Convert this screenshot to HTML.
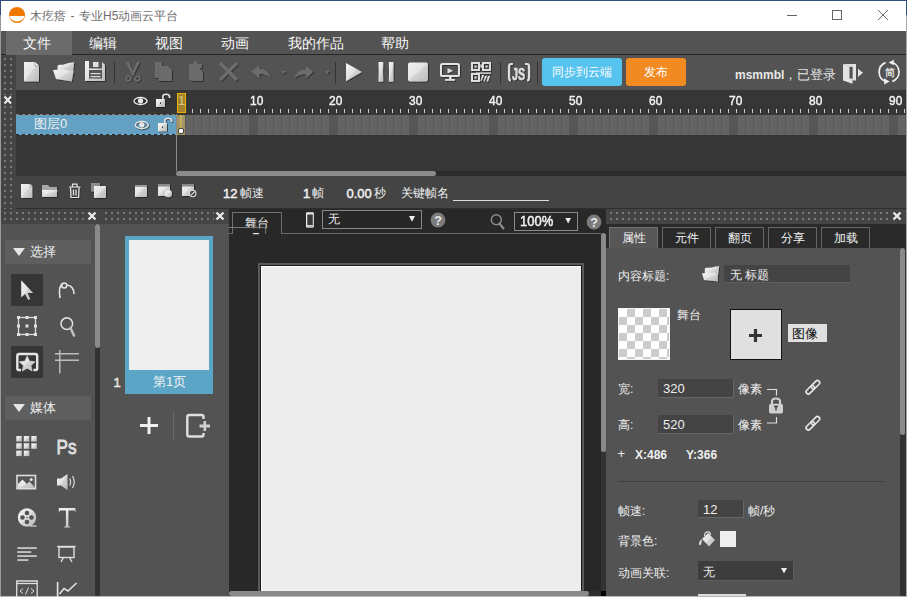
<!DOCTYPE html>
<html><head><meta charset="utf-8">
<style>
*{box-sizing:border-box}
html,body{margin:0;padding:0}
body{width:907px;height:597px;position:relative;overflow:hidden;background:#535353;font-family:"Liberation Sans",sans-serif;color:#e8e8e8}
.a{position:absolute}
.grip{background-image:linear-gradient(90deg,transparent 2px,#444 2px),linear-gradient(#7a7a7a 2px,#444 2px);background-size:6px 6px}
.t{position:absolute;white-space:nowrap;line-height:1}
svg{position:absolute;overflow:visible}
.m{font-size:14px;color:#f8f8f8;top:36px}
.s12{font-size:12px}
.s13{font-size:13px}
.num{color:#f2f2f2;-webkit-text-stroke:0.45px #f2f2f2}
</style></head><body>
<!-- ===== window frame / title ===== -->
<div class="a" style="left:0;top:0;width:907px;height:1px;background:#2f4f7f"></div>
<div class="a" style="left:1px;top:1px;width:905px;height:30px;background:#fff"></div>
<div class="t" style="left:30px;top:10px;font-size:12px;color:#6e6e6e;word-spacing:1.2px">木疙瘩 - 专业H5动画云平台</div>

<!-- ===== menu bar ===== -->
<div class="a" style="left:1px;top:31px;width:905px;height:23px;background:#535353"></div>
<div class="a" style="left:1px;top:54px;width:905px;height:1px;background:#262626"></div>
<div class="a" style="left:6px;top:31px;width:66px;height:24px;background:#6b6b6b"></div>
<div class="t m" style="left:23px">文件</div>
<div class="t m" style="left:89px">编辑</div>
<div class="t m" style="left:155px">视图</div>
<div class="t m" style="left:221px">动画</div>
<div class="t m" style="left:288px">我的作品</div>
<div class="t m" style="left:381px">帮助</div>

<!-- ===== toolbar ===== -->
<div class="a grip" style="left:1px;top:55px;width:15px;height:153px;background-position:3px 3px"></div>
<div class="a" style="left:16px;top:55px;width:890px;height:35px;background:#535353"></div>
<div class="a" style="left:542px;top:58px;width:80px;height:28px;background:#56c2ee;border-radius:3px"></div>
<div class="a" style="left:626px;top:58px;width:60px;height:28px;background:#f28a22;border-radius:3px"></div>
<div class="t s12" style="left:552px;top:66px;color:#fff">同步到云端</div>
<div class="t s12" style="left:644px;top:66px;color:#fff">发布</div>
<div class="t" style="left:735px;top:68.5px;font-size:12px;font-weight:bold;color:#e6e6e6">msmmbl<span style="font-weight:normal;font-size:12.5px">，已登录</span></div>

<!-- ===== timeline ===== -->
<div class="a" style="left:16px;top:90px;width:890px;height:86px;background:#363636"></div>
<!-- layer row -->
<div class="a" style="left:16px;top:114px;width:160px;height:21px;background:#63a0c1"></div><div class="a" style="left:16px;top:114px;width:160px;height:1px;background:repeating-linear-gradient(90deg,#8b7d72 0 3px,#3a3030 3px 6px)"></div><div class="a" style="left:16px;top:134px;width:160px;height:1px;background:repeating-linear-gradient(90deg,#2e2e2e 0 3px,#72b2d6 3px 6px)"></div>
<div class="t s13" style="left:34px;top:117px;color:#f0f0f0">图层0</div>
<!-- frames -->
<div class="a" style="left:177px;top:115px;width:729px;height:20px;background:repeating-linear-gradient(90deg,#585858 0 1px,#646464 1px 8px)"></div>
<div class="a" style="left:249px;top:115px;width:657px;height:20px;background:repeating-linear-gradient(90deg,#565656 0 8px,transparent 8px 80px)"></div>
<div class="a" style="left:177px;top:115px;width:8px;height:20px;background:#a39565"></div>
<div class="a" style="left:176px;top:114px;width:1px;height:57px;background:#8a8a8a"></div>
<!-- ruler ticks -->
<div class="a" style="left:185px;top:109px;width:721px;height:4px;background:repeating-linear-gradient(90deg,transparent 0 7px,#cfcfcf 7px 8px)"></div>
<div class="a" style="left:177px;top:93px;width:9px;height:20px;background:#a2832a;border:1px solid #f0b000"></div>
<div class="t s13 num" style="left:250px;top:93.5px;transform:scaleX(0.92);transform-origin:0 0">10</div>
<div class="t s13 num" style="left:329.3px;top:93.5px;transform:scaleX(0.92);transform-origin:0 0">20</div>
<div class="t s13 num" style="left:409.2px;top:93.5px;transform:scaleX(0.92);transform-origin:0 0">30</div>
<div class="t s13 num" style="left:489.1px;top:93.5px;transform:scaleX(0.92);transform-origin:0 0">40</div>
<div class="t s13 num" style="left:569.0px;top:93.5px;transform:scaleX(0.92);transform-origin:0 0">50</div>
<div class="t s13 num" style="left:648.9px;top:93.5px;transform:scaleX(0.92);transform-origin:0 0">60</div>
<div class="t s13 num" style="left:728.8px;top:93.5px;transform:scaleX(0.92);transform-origin:0 0">70</div>
<div class="t s13 num" style="left:808.7px;top:93.5px;transform:scaleX(0.92);transform-origin:0 0">80</div>
<div class="t s13 num" style="left:888.6px;top:93.5px;transform:scaleX(0.92);transform-origin:0 0">90</div>
<div class="t s13" style="left:178px;top:94px;color:#d8c890">1</div>
<!-- scrollbar -->
<div class="a" style="left:176px;top:171px;width:730px;height:5px;background:#2b2b2b"></div>
<div class="a" style="left:176px;top:171px;width:260px;height:5px;background:#8a8a8a;border-radius:2.5px"></div>
<!-- bottom toolbar -->
<div class="a" style="left:16px;top:176px;width:890px;height:32px;background:#444"></div>
<div class="t s13 num" style="left:223px;top:187px">12</div><div class="t s12" style="left:239.5px;top:187px;color:#eee">帧速</div>
<div class="t s13 num" style="left:303px;top:187px">1</div><div class="t s12" style="left:312px;top:187px;color:#eee">帧</div>
<div class="t s13 num" style="left:346.5px;top:187px">0.00</div><div class="t s12" style="left:374px;top:187px;color:#eee">秒</div>
<div class="t s12" style="left:401px;top:187px;color:#eee">关键帧名</div>
<div class="a" style="left:453px;top:200px;width:96px;height:1px;background:#ddd"></div>

<div class="a" style="left:16px;top:208px;width:890px;height:1px;background:#2e2e2e"></div><div class="a" style="left:1px;top:208px;width:15px;height:1px;background:#444"></div><div class="a" style="left:4px;top:208px;width:2px;height:1px;background:#7a7a7a"></div><div class="a" style="left:10px;top:208px;width:2px;height:1px;background:#7a7a7a"></div>

<!-- ===== left tools panel ===== -->
<div class="a grip" style="left:1px;top:209px;width:99px;height:15px;background-position:3px 3px"></div>
<div class="a" style="left:1px;top:224px;width:94px;height:373px;background:#535353"></div>
<div class="a" style="left:95px;top:224px;width:5px;height:373px;background:#333"></div>
<div class="a" style="left:95px;top:224px;width:5px;height:124px;background:#8a8a8a;border-radius:2.5px"></div>
<div class="a" style="left:5px;top:240px;width:86px;height:24px;background:#5f5f5f"></div>
<div class="t s13" style="left:30px;top:245px;color:#eee">选择</div>
<div class="a" style="left:11px;top:274px;width:32px;height:32px;background:#363636"></div>
<div class="a" style="left:11px;top:346px;width:32px;height:32px;background:#363636"></div>
<div class="a" style="left:5px;top:396px;width:86px;height:24px;background:#5f5f5f"></div>
<div class="t s13" style="left:30px;top:401px;color:#eee">媒体</div>

<!-- ===== pages panel ===== -->
<div class="a" style="left:100px;top:209px;width:3px;height:15px;background:#444"></div>
<div class="a grip" style="left:103px;top:209px;width:126px;height:15px;background-position:2px 3px"></div>
<div class="a" style="left:100px;top:224px;width:129px;height:373px;background:#535353"></div>
<div class="a" style="left:125px;top:236px;width:88px;height:158px;background:#5ba5c6"></div>
<div class="a" style="left:129px;top:240px;width:80px;height:130px;background:#eeeeee"></div>
<div class="t s13" style="left:153px;top:375px;color:#f4f4f4">第1页</div>
<div class="t s13 num" style="left:113.5px;top:376px;color:#e8e0c8">1</div>

<!-- ===== stage ===== -->
<div class="a" style="left:229px;top:209px;width:377px;height:388px;background:#282828"></div>
<div class="a" style="left:281px;top:233px;width:321px;height:1px;background:#6a6a6a"></div><div class="a" style="left:229px;top:233px;width:3px;height:1px;background:#6a6a6a"></div>
<div class="a" style="left:232px;top:212px;width:50px;height:22px;border:1px solid #707070;border-bottom:none;background:#282828"></div>
<div class="t s12" style="left:245px;top:217px;color:#eee">舞台</div>
<div class="a" style="left:322px;top:210px;width:100px;height:19px;border:1px solid #8a8a8a;background:#262626"></div>
<div class="t s12" style="left:328px;top:213px;color:#eee">无</div>
<div class="a" style="left:514px;top:212px;width:64px;height:19px;border:1px solid #8a8a8a;background:#262626"></div>
<div class="t s13 num" style="left:520px;top:215px;transform:scaleY(1.1);transform-origin:0 100%">100%</div>
<div class="a" style="left:258px;top:263px;width:326px;height:340px;background:#5a5a5a"></div>
<div class="a" style="left:260px;top:265px;width:322px;height:340px;background:#1a1a1a"></div>
<div class="a" style="left:261px;top:266px;width:320px;height:340px;background:#ededed;border-top:1px solid #fff;border-left:1px solid #fff"></div>
<div class="a" style="left:601px;top:233px;width:5px;height:358px;background:#333"></div>
<div class="a" style="left:601px;top:233px;width:5px;height:219px;background:#8a8a8a;border-radius:2.5px"></div>
<div class="a" style="left:229px;top:591px;width:372px;height:5px;background:#2d2d2d"></div>
<div class="a" style="left:229px;top:591px;width:360px;height:5px;background:#8a8a8a;border-radius:2.5px"></div>
<div class="a" style="left:601px;top:591px;width:5px;height:5px;background:#000"></div>

<!-- ===== right properties panel ===== -->
<div class="a grip" style="left:606px;top:209px;width:300px;height:15px;background-position:4px 3px"></div>
<div class="a" style="left:606px;top:224px;width:300px;height:24px;background:#2a2a2a"></div>
<div class="a" style="left:609px;top:227px;width:49px;height:21px;background:#575757;border:1px solid #707070;border-bottom:none"></div>
<div class="a" style="left:662px;top:227px;width:49px;height:21px;border:1px solid #666;border-bottom:none"></div>
<div class="a" style="left:715px;top:227px;width:49px;height:21px;border:1px solid #666;border-bottom:none"></div>
<div class="a" style="left:768px;top:227px;width:49px;height:21px;border:1px solid #666;border-bottom:none"></div>
<div class="a" style="left:821px;top:227px;width:49px;height:21px;border:1px solid #666;border-bottom:none"></div>
<div class="t s12" style="left:622px;top:232px;color:#f2f2f2">属性</div>
<div class="t s12" style="left:675px;top:232px;color:#f2f2f2">元件</div>
<div class="t s12" style="left:728px;top:232px;color:#f2f2f2">翻页</div>
<div class="t s12" style="left:781px;top:232px;color:#f2f2f2">分享</div>
<div class="t s12" style="left:834px;top:232px;color:#f2f2f2">加载</div>
<div class="a" style="left:606px;top:248px;width:294px;height:349px;background:#535353"></div>
<div class="a" style="left:900px;top:248px;width:6px;height:349px;background:#333"></div>
<div class="a" style="left:900px;top:248px;width:5px;height:187px;background:#8a8a8a;border-radius:2.5px"></div>

<div class="t s12" style="left:618px;top:270px;color:#eee">内容标题:</div>
<div class="a" style="left:724px;top:265px;width:126px;height:18px;background:#444;border-bottom:1px solid #5e5e5e"></div>
<div class="t s12" style="left:730px;top:269px;color:#eee">无 标题</div>
<div class="a" style="left:618px;top:308px;width:52px;height:52px;border:1px solid #f4f4f4;background-color:#fff;background-image:conic-gradient(#cccccc 25%,#fff 0 50%,#cccccc 0 75%,#fff 0);background-size:16px 16px"></div>
<div class="t s12" style="left:677px;top:309px;color:#eee">舞台</div>
<div class="a" style="left:730px;top:309px;width:52px;height:51px;background:#e0e0e0;border:1px solid #111"></div>
<div class="a" style="left:788px;top:324px;width:39px;height:18px;background:#e0e0e0"></div>
<div class="t s13" style="left:792px;top:327px;color:#111">图像</div>

<div class="t s12" style="left:618px;top:383px;color:#eee">宽:</div>
<div class="a" style="left:658px;top:379px;width:76px;height:19px;background:#444;border-right:1px solid #666;border-bottom:1px solid #666"></div>
<div class="t s13" style="left:663px;top:382px;color:#eee">320</div>
<div class="t s12" style="left:738px;top:383px;color:#eee">像素</div>
<div class="t s12" style="left:618px;top:419px;color:#eee">高:</div>
<div class="a" style="left:658px;top:415px;width:76px;height:19px;background:#444;border-right:1px solid #666;border-bottom:1px solid #666"></div>
<div class="t s13" style="left:663px;top:418px;color:#eee">520</div>
<div class="t s12" style="left:738px;top:419px;color:#eee">像素</div>
<div class="t s13" style="left:617.5px;top:447px;color:#eee">+</div>
<div class="t s12" style="left:635px;top:449px;color:#eee;font-weight:bold">X:486</div>
<div class="t s12" style="left:686px;top:449px;color:#eee;font-weight:bold">Y:366</div>
<div class="a" style="left:618px;top:481px;width:267px;height:1px;background:#404040"></div>
<div class="t s12" style="left:618px;top:505px;color:#eee">帧速:</div>
<div class="a" style="left:698px;top:500px;width:46px;height:18px;background:#444;border-right:1px solid #666;border-bottom:1px solid #666"></div>
<div class="t s13" style="left:703px;top:503px;color:#eee">12</div>
<div class="t s12" style="left:748px;top:505px;color:#eee">帧/秒</div>
<div class="t s12" style="left:618px;top:535px;color:#eee">背景色:</div>
<div class="a" style="left:720px;top:531px;width:16px;height:16px;background:#eee"></div>
<div class="t s12" style="left:618px;top:567px;color:#eee">动画关联:</div>
<div class="a" style="left:698px;top:561px;width:96px;height:20px;background:#3d3d3d;border-right:1px solid #5e5e5e;border-bottom:1px solid #5e5e5e"></div>
<div class="t s12" style="left:703px;top:566px;color:#eee">无</div>
<div class="a" style="left:698px;top:594px;width:48px;height:3px;background:#ddd"></div>

<!-- borders -->
<div class="a" style="left:0;top:0;width:1px;height:597px;background:#9a9a9a"></div>
<div class="a" style="left:0;top:0;width:1px;height:15px;background:#2f4f7f"></div>
<div class="a" style="left:906px;top:0;width:1px;height:597px;background:#a8a8a8"></div>
<div class="a" style="left:906px;top:0;width:1px;height:15px;background:#2f4f7f"></div>
<div class="a" style="left:0;top:596px;width:907px;height:1px;background:#b5b5b5"></div>

<!-- ===== ICONS ===== -->
<svg style="left:0;top:0" width="907" height="597" viewBox="0 0 907 597">
<defs>
<linearGradient id="g1" x1="0" y1="0" x2="1" y2="1"><stop offset="0" stop-color="#f4f4f4"/><stop offset="0.5" stop-color="#e2e2e2"/><stop offset="0.5" stop-color="#d4d4d4"/><stop offset="1" stop-color="#b9b9b9"/></linearGradient>
<linearGradient id="g2" x1="0" y1="0" x2="1" y2="1"><stop offset="0" stop-color="#727272"/><stop offset="0.5" stop-color="#6a6a6a"/><stop offset="0.5" stop-color="#626262"/><stop offset="1" stop-color="#5a5a5a"/></linearGradient>
<filter id="sh" x="-20%" y="-20%" width="150%" height="150%"><feDropShadow dx="0.8" dy="0.8" stdDeviation="0.4" flood-color="#1e1e1e" flood-opacity="0.85"/></filter>
</defs>
<!-- title logo -->
<circle cx="17" cy="15" r="8" fill="#f07800"/>
<path d="M9.6 16 H24.4 A7.4 5.4 0 0 1 9.6 16 Z" fill="#fff"/>
<!-- window controls -->
<rect x="787" y="15" width="10" height="1" fill="#666"/>
<rect x="832.5" y="10.5" width="9" height="9" fill="none" stroke="#666" stroke-width="1"/>
<path d="M878 10 L888 20 M888 10 L878 20" stroke="#666" stroke-width="1"/>

<!-- toolbar light icons -->
<g filter="url(#sh)" fill="url(#g1)">
 <path d="M24 62 H35 L39 66 V81.5 H24 Z"/>
 <path d="M57.5 72 V66.5 Q57.5 64.8 59.5 64.8 H63 Q68 62.5 74.2 62.3 L73 72 Z"/>
 <path d="M53 70 L62 69.6 Q66 69.4 69.3 71.2 L73.6 70.5 L71.8 81.5 L56 79 Z"/>
 <path d="M85 61 H101 L105 65 V81 H85 Z"/>
 <path d="M346 63 L362 72 L346 81.3 Z"/>
 <path d="M378.5 62 H383.3 Q382.8 72 383.3 81.7 H378.5 Q379 72 378.5 62 Z"/>
 <path d="M388.8 62 H393.6 Q393.1 72 393.6 81.7 H388.8 Q389.3 72 388.8 62 Z"/>
 <rect x="408" y="62.6" width="20" height="19" rx="2"/>
</g>
<path d="M35 62 V66 H39" fill="#fafafa" stroke="#8a8a8a" stroke-width="0.8"/>
<rect x="89" y="61" width="13" height="7.5" fill="#555"/>
<rect x="93" y="62" width="5.5" height="5" fill="#e0e0e0"/>
<rect x="89" y="70" width="13" height="8.5" fill="#555"/>
<rect x="90.5" y="73" width="10" height="1.2" fill="#ddd"/>
<rect x="90.5" y="76" width="10" height="1.2" fill="#ddd"/>

<!-- separators -->
<rect x="114" y="62" width="1" height="22" fill="#333"/>
<rect x="335" y="62" width="1" height="22" fill="#333"/>
<rect x="500" y="62" width="1" height="22" fill="#333"/>
<rect x="537" y="62" width="1" height="22" fill="#333"/>

<!-- dim icons -->
<g filter="url(#sh)" fill="#6c6c6c" stroke="none">
 <path d="M125.5 62 L128.8 62 L134.5 74.5 L133 76 Z"/>
 <path d="M140 62 L136.7 62 L131.5 74.5 L133 76 Z"/>
 <circle cx="128.5" cy="78.5" r="2.3" fill="none" stroke="#6c6c6c" stroke-width="1.6"/>
 <circle cx="137.5" cy="78.5" r="2.3" fill="none" stroke="#6c6c6c" stroke-width="1.6"/>
 <path d="M155 62 H162 V66 H158.5 V78 H155 Z"/>
 <path d="M158.5 66 H168 L172 70 V81 H158.5 Z"/>
 <path d="M189 64 H193 L194 61.5 H197 L198 64 H202 V68 H193 V80.5 H189 Z"/>
 <path d="M193 68 H199 L203 72 V81 H193 Z"/>
 <path d="M220 63 L237 80 M237 63 L220 80" stroke="#6c6c6c" stroke-width="3.4"/>
 <path d="M251 71.5 L259.5 65.5 V69 Q268 68.5 271 78.5 Q266 73.5 259.5 74 V78.5 Z"/>
 <path d="M313.6 71.8 L306 66 V69.3 Q297 69.5 294.6 78.5 Q300 74 306 74.3 V78.5 Z"/>
 <path d="M281 71 H286 L283.5 74 Z"/>
 <path d="M325 71 H330 L327.5 74 Z"/>
</g>
<!-- monitor -->
<g filter="url(#sh)">
 <rect x="441" y="64" width="18" height="12" rx="1.5" fill="none" stroke="#e4e4e4" stroke-width="2"/>
 <path d="M447.5 68 L453 70.8 L447.5 73.5 Z" fill="#ddd"/>
 <rect x="449" y="77" width="2.5" height="2" fill="#ddd"/>
 <rect x="445" y="79" width="10" height="1.8" fill="#ddd"/>
</g>
<!-- QR -->
<g filter="url(#sh)" fill="#dedede">
 <path fill-rule="evenodd" d="M471 62 H480 V71 H471 Z M473 64 V69 H478 V64 Z"/>
 <rect x="474.5" y="65.5" width="2" height="2"/>
 <path fill-rule="evenodd" d="M482 62 H491 V71 H482 Z M484 64 V69 H489 V64 Z"/>
 <rect x="485.5" y="65.5" width="2" height="2"/>
 <path fill-rule="evenodd" d="M471 73 H480 V82 H471 Z M473 75 V80 H478 V75 Z"/>
 <rect x="474.5" y="76.5" width="2" height="2"/>
 <rect x="480.5" y="64.5" width="1.5" height="3"/>
 <path d="M476 72.5 H491 V73.8 H476 Z"/>
 <path d="M482 75 L484 75 L481.5 81 L480.5 81 Z M485 76 L487 76 L484.5 81.5 L483.5 81.5 Z M488 76 L490 76 L488 81.5 L486.5 81.5 Z"/>
</g>
<!-- JS -->
<g filter="url(#sh)" fill="none" stroke="#dcdcdc" stroke-width="2.2">
 <path d="M513 64 H511 Q509 64 509 66.5 V78 Q509 80.5 511 80.5"/>
 <path d="M525 64 H527 Q529 64 529 66.5 V78 Q529 80.5 527 80.5"/>
</g>
<text x="512" y="79.5" font-family="Liberation Sans" font-weight="bold" font-size="16" fill="#dcdcdc" stroke="#dcdcdc" stroke-width="0.5" filter="url(#sh)" textLength="13" lengthAdjust="spacingAndGlyphs">JS</text>
<!-- door -->
<g fill="#e2e2e2">
 <path d="M843 64 H856 V80.5 H852.5 V67 L843 64 Z"/>
 <path d="M843 64 L852.5 67 V83.8 L843 80.5 Z"/>
 <path d="M858 68.7 L863 72.8 L858 77 Z"/>
</g>
<rect x="849.5" y="67" width="3" height="11.5" fill="#505050"/>
<!-- refresh -->
<g fill="none" stroke="#efefef" stroke-width="1.7">
 <path d="M885.6 62.6 A10 10 0 0 0 886.5 81.6"/>
 <path d="M892.4 81.4 A10 10 0 0 0 891.5 62.3"/>
</g>
<path d="M884 78.3 L889.6 81.5 L884.3 84.5 Z" fill="#efefef"/>
<path d="M893.9 59.8 L888.6 62.5 L893.6 65.2 Z" fill="#efefef"/>
<text x="884.5" y="76.3" font-size="10" fill="#f4f4f4" stroke="#f4f4f4" stroke-width="0.2">简</text>

<!-- timeline close x -->
<rect x="2" y="95" width="12" height="11" fill="#444"/>
<path d="M4.5 96.5 L11 103.5 M11 96.5 L4.5 103.5" stroke="#eaeaea" stroke-width="2.2"/>
<!-- eye/lock header -->
<g filter="url(#sh)">
 <ellipse cx="140.5" cy="101" rx="6.5" ry="3.6" fill="none" stroke="#e8e8e8" stroke-width="1.3"/>
 <circle cx="140.5" cy="100.8" r="2.6" fill="#e8e8e8"/>
 <rect x="156" y="99" width="9" height="8" fill="url(#g1)"/>
 <path d="M162.8 99 V96.5 Q162.8 94.3 166.2 94.3 Q169.5 94.3 169.5 96.5 V98" fill="none" stroke="#e0e0e0" stroke-width="1.6"/>
</g>
<rect x="160" y="102.3" width="1" height="1.6" fill="#333"/>
<g filter="url(#sh)">
 <ellipse cx="141.8" cy="125" rx="6.5" ry="3.6" fill="none" stroke="#e8e8e8" stroke-width="1.3"/>
 <circle cx="141.8" cy="124.8" r="2.6" fill="#e8e8e8"/>
 <rect x="158" y="123" width="9" height="8.4" fill="url(#g1)"/>
 <path d="M164.8 123 V120.5 Q164.8 118.3 168.2 118.3 Q171.5 118.3 171.5 120.5 V122" fill="none" stroke="#e0e0e0" stroke-width="1.6"/>
</g>
<rect x="162" y="126.3" width="1" height="1.6" fill="#333"/>
<!-- keyframe -->
<rect x="180.5" y="115" width="1" height="14" fill="#e8c84a"/>
<circle cx="181" cy="131" r="2.8" fill="#fff" stroke="#333" stroke-width="1"/>

<!-- bottom toolbar icons -->
<g filter="url(#sh)" fill="url(#g1)">
 <path d="M21 184 H30 L32.3 186.3 V198 H21 Z"/>
 <path d="M42 185 H48 L49.5 187 H57 V197 H42 Z" fill="#a8a8a8"/>
 <path d="M42 190 H57.3 L56.5 197 H42.5 Z"/>
 <rect x="91" y="183" width="9" height="8.6" fill="#8c8c8c"/>
 <rect x="94" y="186" width="12" height="12" />
 <rect x="135" y="185" width="12" height="12"/>
 <rect x="158" y="184" width="12" height="12"/>
 <circle cx="168.4" cy="193.7" r="3.6"/>
 <rect x="182" y="184" width="12" height="12"/>
</g>
<path d="M30 184 V186.3 H32.3" fill="#fafafa" stroke="#8a8a8a" stroke-width="0.7"/>
<rect x="135" y="185" width="12" height="2" fill="#9a9a9a"/>
<rect x="158" y="184" width="12" height="2.5" fill="#8a8a8a"/>
<rect x="182" y="184" width="12" height="2.5" fill="#8a8a8a"/>
<g filter="url(#sh)" fill="none" stroke="#e0e0e0" stroke-width="1.2">
 <path d="M69 187 H80.5 M72.5 186.5 V184.2 H77 V186.5"/>
 <path d="M70.5 187.5 L71 197.5 H78.5 L79 187.5"/>
 <path d="M73.5 189.5 V195.5 M76 189.5 V195.5"/>
</g>
<circle cx="192.7" cy="193.5" r="3.2" fill="#444" stroke="#e0e0e0" stroke-width="1.1"/>
<path d="M190.8 195.4 L194.6 191.6" stroke="#e0e0e0" stroke-width="1.1"/>
<!-- panel close X icons -->
<rect x="85" y="210" width="14" height="13" fill="#444"/><rect x="214" y="210" width="15" height="13" fill="#444"/><rect x="890" y="210" width="16" height="13" fill="#444"/>
<g stroke="#e8e8e8" stroke-width="2.4">
 <path d="M88.5 212.5 L95.5 219.5 M95.5 212.5 L88.5 219.5"/>
 <path d="M216.5 212.5 L223.5 219.5 M223.5 212.5 L216.5 219.5"/>
 <path d="M893.5 212.5 L900.5 219.5 M900.5 212.5 L893.5 219.5"/>
</g>
<!-- section triangles -->
<path d="M13 248 H25 L19 256 Z" fill="#e6e6e6"/>
<path d="M13 404 H25 L19 412 Z" fill="#e6e6e6"/>
<!-- select arrow -->
<path d="M21.2 280.3 V297.6 L25 294 L28.2 300 L30.3 299 L27.7 293 H33.2 Z" fill="url(#g1)"/>
<!-- lasso -->
<path d="M60 298 Q58 286 63 283.5" fill="none" stroke="#e6e6e6" stroke-width="1.6"/>
<path d="M66.7 285 Q74 286 74 294" fill="none" stroke="#e6e6e6" stroke-width="1.6"/>
<circle cx="64.2" cy="285.6" r="2.5" fill="none" stroke="#e6e6e6" stroke-width="1.5"/>
<!-- transform -->
<g fill="#e0e0e0">
 <rect x="18.5" y="317.5" width="17" height="17" fill="none" stroke="#dcdcdc" stroke-width="1.3"/>
 <rect x="17" y="316" width="3" height="3"/><rect x="25.5" y="316" width="3" height="3"/><rect x="34" y="316" width="3" height="3"/>
 <rect x="17" y="324.5" width="3" height="3"/><rect x="34" y="324.5" width="3" height="3"/>
 <rect x="17" y="333" width="3" height="3"/><rect x="25.5" y="333" width="3" height="3"/><rect x="34" y="333" width="3" height="3"/>
 <rect x="25.5" y="324.5" width="3" height="3"/>
</g>
<!-- magnifier -->
<circle cx="66.8" cy="323.7" r="5.8" fill="none" stroke="#dedede" stroke-width="1.6"/>
<path d="M70.5 328 L74 335.5" stroke="#bdbdbd" stroke-width="2.6" stroke-linecap="round"/>
<!-- star frame -->
<path d="M21 370 H18.8 Q17.3 370 17.3 368.5 V356 Q17.3 354 19.3 354 H35.2 Q37.2 354 37.2 356 V368.5 Q37.2 370 35.7 370 H33.5" fill="none" stroke="#e6e6e6" stroke-width="2.4"/>
<path d="M27.2 355.9 L29.5 361.1 L35.2 361.7 L31.0 365.5 L32.1 371.1 L27.2 368.2 L22.3 371.1 L23.4 365.5 L19.2 361.7 L24.9 361.1 Z" fill="url(#g1)" stroke="#d8d8d8" stroke-width="0.6" stroke-linejoin="round"/>
<!-- guides -->
<g stroke="#bdbdbd" stroke-width="1.4">
 <path d="M59.8 350 V373.5"/>
 <path d="M55 353.8 H79 M55 360.2 H79"/>
</g>
<!-- grid -->
<g fill="url(#g1)">
 <rect x="16.3" y="436" width="5.5" height="5.5"/><rect x="23.8" y="436" width="5.5" height="5.5"/><rect x="31.3" y="436" width="5.5" height="5.5"/>
 <rect x="16.3" y="443.3" width="5.5" height="5.5"/><rect x="23.8" y="443.3" width="5.5" height="5.5"/><rect x="31.3" y="443.3" width="5.5" height="5.5"/>
 <rect x="16.3" y="450.6" width="5.5" height="5.5"/><rect x="23.8" y="450.6" width="5.5" height="5.5"/>
</g>
<text x="56.5" y="453.5" font-family="Liberation Sans" font-size="21" fill="#dedede" stroke="#dedede" stroke-width="0.9" textLength="20" lengthAdjust="spacingAndGlyphs">Ps</text>
<!-- image -->
<rect x="17" y="475.5" width="18.5" height="13.2" fill="none" stroke="#dedede" stroke-width="1.6"/>
<path d="M18 488 L18 484 L22.5 479.5 L27 484 L29.5 481.5 L34.5 487 V488 Z" fill="url(#g1)"/>
<circle cx="31.2" cy="479.5" r="1.5" fill="#e6e6e6"/>
<!-- speaker -->
<path d="M57 478.5 H61 L67.5 474 V490 L61 485.5 H57 Z" fill="url(#g1)"/>
<path d="M69.8 478.5 Q71.5 482 69.8 485.5 M72.5 476 Q76 482 72.5 488" fill="none" stroke="#dedede" stroke-width="1.2"/>
<!-- film reel -->
<circle cx="27" cy="517.5" r="9.2" fill="url(#g1)"/>
<g fill="#535353">
 <circle cx="27" cy="513" r="2.3"/><circle cx="27" cy="522" r="2.3"/><circle cx="22.5" cy="517.5" r="2.3"/><circle cx="31.5" cy="517.5" r="2.3"/>
 <circle cx="27" cy="517.5" r="0.7"/>
</g>
<path d="M30 526 H36.5" stroke="#dedede" stroke-width="1.2"/>
<!-- T -->
<path d="M58.8 508 H75.5 V513 L74.5 510.5 H68.4 V526 L71 527.5 H63.3 L65.9 526 V510.5 H59.8 L58.8 513 Z" fill="url(#g1)"/>
<!-- text lines -->
<g fill="#dedede">
 <rect x="17.3" y="547.3" width="19.5" height="1.5"/>
 <rect x="17.3" y="551.3" width="14" height="1.5"/>
 <rect x="17.3" y="555.3" width="19.5" height="1.5"/>
 <rect x="17.3" y="559.3" width="11" height="1.5"/>
</g>
<!-- board -->
<g fill="none" stroke="#dedede" stroke-width="1.4">
 <path d="M57 546.5 H75.7"/>
 <rect x="59" y="547" width="15" height="10.5"/>
 <path d="M63.5 557.5 L61 562 M69.5 557.5 L72 562"/>
</g>
<!-- code window -->
<g fill="none" stroke="#dedede" stroke-width="1.3">
 <path d="M16.7 597 V581 H37.2 V597"/>
 <path d="M16.7 583.5 H37.2"/>
 <path d="M23 588.5 L20 591 L23 593.5 M31 588.5 L34 591 L31 593.5 M28.5 587.5 L25.5 594.5" stroke-width="1"/>
</g>
<!-- chart -->
<path d="M57.6 582 V597" stroke="#e6e6e6" stroke-width="1.6"/>
<path d="M59.5 594 L64 588.5 L68 591 L76.5 583" fill="none" stroke="#e6e6e6" stroke-width="1.5"/>

<!-- pages panel -->
<rect x="140" y="424" width="18" height="3" fill="#f0f0f0"/>
<rect x="147.5" y="417" width="3" height="17" fill="#f0f0f0"/>
<rect x="173" y="411" width="1" height="30" fill="#6a6a6a"/>
<path d="M203.5 419 V417 Q203.5 415 201.5 415 H189.5 Q187.3 415 187.3 417 V434.5 Q187.3 436.5 189.5 436.5 H201.5 Q203.5 436.5 203.5 434.5 V433" fill="none" stroke="#e0e0e0" stroke-width="2.4"/>
<rect x="199.5" y="424.5" width="10.5" height="3" fill="#d0d0d0"/>
<rect x="203.5" y="421" width="2.6" height="10" fill="#d0d0d0"/>
<!-- stage header -->
<path d="M229 227.5 H265.6 V234" fill="none" stroke="#7a7a7a" stroke-width="1"/>
<rect x="253" y="233" width="6" height="1.2" fill="#e8e8e8"/>
<rect x="306" y="212.3" width="8" height="15.5" rx="1.2" fill="url(#g1)"/>
<rect x="307.3" y="214.5" width="5.4" height="10.5" fill="#3a3a3a"/>
<path d="M409 216 H415 L412 221.7 Z" fill="#eee"/>
<circle cx="438" cy="220" r="7.4" fill="#7b7b7b"/>
<text x="438" y="224.6" text-anchor="middle" font-family="Liberation Sans" font-weight="bold" font-size="12.5" fill="#e8e8e8">?</text>
<circle cx="496.3" cy="219.8" r="5" fill="none" stroke="#8a8a8a" stroke-width="1.5"/>
<path d="M499.5 223.5 L503.5 228.5" stroke="#8a8a8a" stroke-width="2.2" stroke-linecap="round"/>
<path d="M565.3 218 H571 L568.2 223.5 Z" fill="#eee"/>
<circle cx="594" cy="222" r="7.4" fill="#7b7b7b"/>
<text x="594" y="226.6" text-anchor="middle" font-family="Liberation Sans" font-weight="bold" font-size="12.5" fill="#e8e8e8">?</text>

<!-- right panel -->
<g filter="url(#sh)" fill="url(#g1)">
 <path d="M704.8 273 V269 Q705 267.5 707 267.8 L712 267.5 Q715.5 266.3 719.2 266.3 L718 276 H705 Z"/>
 <path d="M702 273.3 L711 272.8 Q714 272 716 273.8 L717.5 273.5 L718 281.5 L704 280 Z"/>
</g>
<path d="M749 335.5 H762 M755.5 329 V342" stroke="#333" stroke-width="3.2"/>
<g fill="none" stroke="#e0e0e0" stroke-width="1.2">
 <path d="M767 389.5 H776.5 V395.5"/>
 <path d="M767 423 H776.5 V417"/>
</g>
<path d="M772 404 V401.5 Q772 398.5 776 398.5 Q780 398.5 780 401.5 V404" fill="none" stroke="#cfcfcf" stroke-width="2.2"/>
<rect x="769" y="403.8" width="14" height="9.8" rx="2" fill="#cfcfcf"/>
<path d="M774 406.5 H778 M776 406.5 V410.5" stroke="#444" stroke-width="1.5"/>
<g fill="none" stroke="#e8e8e8" stroke-width="1.6">
 <rect x="808.1" y="384.8" width="4.4" height="10" rx="2.2" transform="rotate(45 810.3 389.8)"/>
 <rect x="813.3" y="379.7" width="4.4" height="10" rx="2.2" transform="rotate(45 815.5 384.7)"/>
 <rect x="808.1" y="420.8" width="4.4" height="10" rx="2.2" transform="rotate(45 810.3 425.8)"/>
 <rect x="813.3" y="415.7" width="4.4" height="10" rx="2.2" transform="rotate(45 815.5 420.7)"/>
</g>
<!-- bucket -->
<path d="M702 539 L708 533 L715 540 L709 546.5 Z" fill="url(#g1)"/>
<path d="M704.5 536 Q704.5 531.5 708 531.8 Q710.5 532 710.5 535" fill="none" stroke="#dcdcdc" stroke-width="1.2"/>
<path d="M702 539 Q698.5 541 699 545 Q700.5 546 701.3 543.5 Z" fill="#dcdcdc"/>
<path d="M781 568 H787 L784 573.6 Z" fill="#eee"/>
</svg>
</body></html>
